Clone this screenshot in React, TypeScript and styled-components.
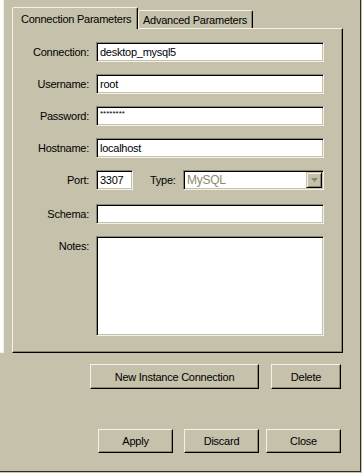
import React from 'react';
import styled, { createGlobalStyle } from 'styled-components';

const BG = '#c5c1aa';
const HI = '#f3f1e8';
const SH = '#8b876f';
const DK = '#000000';

const Global = createGlobalStyle`
  html, body { margin: 0; padding: 0; background: ${BG}; }
  body { font-family: "Liberation Sans", Arial, sans-serif; font-size: 11px; letter-spacing: -0.25px; color: #000; }
  * { box-sizing: border-box; }
`;

const Window = styled.div`
  width: 361px;
  height: 472px;
  background: ${BG};
  border-right: 1px solid #2e2d24;
  border-bottom: 1px solid #2e2d24;
  display: flex;
  flex-direction: column;
`;

const Top = styled.div`
  display: flex;
  height: 353px;
`;

const SideList = styled.div`
  width: 4px;
  height: 353px;
  background: #fff;
  border-right: 1px solid ${HI};
  border-bottom: 1px solid ${HI};
`;

const TabArea = styled.div`
  margin-left: 8px;
  width: 331px;
  display: flex;
  flex-direction: column;
`;

const TabsRow = styled.div`
  display: flex;
  align-items: flex-end;
  height: 28px;
  padding-top: 7px;
`;

const Tab = styled.div<{ $active?: boolean; $w: number }>`
  width: ${p => p.$w}px;
  height: ${p => (p.$active ? 22 : 18)}px;
  margin-bottom: ${p => (p.$active ? -1 : 0)}px;
  position: relative;
  z-index: ${p => (p.$active ? 2 : 1)};
  background: ${BG};
  border-top: 1px solid ${HI};
  border-left: 1px solid ${HI};
  border-right: 1px solid ${DK};
  border-radius: 2px 2px 0 0;
  box-shadow: inset -1px 0 0 ${SH};
  padding-left: ${p => (p.$active ? 8 : 4)}px;
  padding-top: ${p => (p.$active ? 5 : 3)}px;
  white-space: nowrap;
  line-height: 12px;
`;

const Panel = styled.div`
  flex: 1;
  border-top: 1px solid ${HI};
  border-left: 1px solid ${HI};
  border-right: 1px solid ${DK};
  border-bottom: 1px solid ${DK};
  box-shadow: inset -1px -1px 0 ${SH};
  padding: 13px 0 0 0;
  display: flex;
  flex-direction: column;
  gap: 12px;
`;

const Row = styled.div<{ $extra?: number }>`
  display: grid;
  grid-template-columns: 77px 228px;
  column-gap: 6px;
  margin-bottom: ${p => p.$extra || 0}px;
`;

const Label = styled.div<{ $top?: boolean }>`
  text-align: right;
  line-height: 20px;
  padding-right: 1px;
  align-self: ${p => (p.$top ? 'start' : 'center')};
`;

const Field = styled.div<{ $w?: number; $h?: number; $small?: boolean }>`
  width: ${p => (p.$w ? `${p.$w}px` : '100%')};
  height: ${p => p.$h || 20}px;
  background: #fff;
  border-top: 1px solid ${SH};
  border-left: 1px solid ${SH};
  border-bottom: 1px solid ${HI};
  border-right: 1px solid ${HI};
  box-shadow: inset 1px 1px 0 ${DK}, inset -1px -1px 0 ${BG};
  padding-left: 3px;
  line-height: ${p => (p.$small ? '12px' : '18px')};
  font-size: ${p => (p.$small ? '8px' : '11px')};
  letter-spacing: ${p => (p.$small ? '0' : '-0.25px')};
  padding-top: ${p => (p.$small ? 1 : 0)}px;
  white-space: nowrap;
  overflow: hidden;
`;

const PortLine = styled.div`
  display: flex;
  align-items: center;
`;

const TypeLabel = styled.div`
  margin-left: 17px;
  width: 33px;
  line-height: 20px;
`;

const Select = styled.div`
  width: 141px;
  height: 20px;
  background: #fff;
  border-top: 1px solid ${SH};
  border-left: 1px solid ${SH};
  border-bottom: 1px solid ${HI};
  border-right: 1px solid ${HI};
  box-shadow: inset 1px 1px 0 ${DK}, inset -1px -1px 0 ${BG};
  display: flex;
  padding: 1px;
`;

const SelectText = styled.div`
  flex: 1;
  padding-left: 2px;
  line-height: 16px;
  color: #8c8a6c;
  font-size: 12px;
`;

const ArrowBtn = styled.div`
  width: 16px;
  height: 16px;
  background: ${BG};
  border-top: 1px solid ${BG};
  border-left: 1px solid ${BG};
  border-right: 1px solid ${DK};
  border-bottom: 1px solid ${DK};
  box-shadow: inset 1px 1px 0 ${HI}, inset -1px -1px 0 ${SH};
  display: flex;
  align-items: center;
  justify-content: center;
`;

const ButtonRow = styled.div<{ $mt: number; $h: number }>`
  display: flex;
  justify-content: flex-end;
  margin-top: ${p => p.$mt}px;
  height: ${p => p.$h}px;
  padding-right: 19px;
`;

const Button = styled.div<{ $w: number; $ml?: number }>`
  width: ${p => p.$w}px;
  height: 100%;
  margin-left: ${p => p.$ml || 0}px;
  background: ${BG};
  border-top: 1px solid ${HI};
  border-left: 1px solid ${HI};
  border-right: 1px solid ${DK};
  border-bottom: 1px solid ${DK};
  box-shadow: inset -1px -1px 0 ${SH};
  display: flex;
  align-items: center;
  justify-content: center;
  white-space: nowrap;
`;

const fields: [string, string][] = [
  ['Connection:', 'desktop_mysql5'],
  ['Username:', 'root'],
];

export default function App() {
  return (
    <>
      <Global />
      <Window>
        <Top>
          <SideList />
          <TabArea>
            <TabsRow>
              <Tab $active $w={126}>Connection Parameters</Tab>
              <Tab $w={115}>Advanced Parameters</Tab>
            </TabsRow>
            <Panel>
              {fields.map(([l, v]) => (
                <Row key={l}>
                  <Label>{l}</Label>
                  <Field>{v}</Field>
                </Row>
              ))}
              <Row>
                <Label>Password:</Label>
                <Field $small>********</Field>
              </Row>
              <Row>
                <Label>Hostname:</Label>
                <Field>localhost</Field>
              </Row>
              <Row $extra={2}>
                <Label>Port:</Label>
                <PortLine>
                  <Field $w={37}>3307</Field>
                  <TypeLabel>Type:</TypeLabel>
                  <Select>
                    <SelectText>MySQL</SelectText>
                    <ArrowBtn>
                      <svg width="7" height="4" viewBox="0 0 7 4">
                        <path d="M0 0h7L3.5 4z" fill={SH} />
                      </svg>
                    </ArrowBtn>
                  </Select>
                </PortLine>
              </Row>
              <Row>
                <Label>Schema:</Label>
                <Field />
              </Row>
              <Row>
                <Label $top>Notes:</Label>
                <Field $h={100} />
              </Row>
            </Panel>
          </TabArea>
        </Top>
        <ButtonRow $mt={11} $h={25}>
          <Button $w={169}>New Instance Connection</Button>
          <Button $w={70} $ml={12}>Delete</Button>
        </ButtonRow>
        <ButtonRow $mt={40} $h={24}>
          <Button $w={75}>Apply</Button>
          <Button $w={75} $ml={11}>Discard</Button>
          <Button $w={75} $ml={7}>Close</Button>
        </ButtonRow>
      </Window>
    </>
  );
}
